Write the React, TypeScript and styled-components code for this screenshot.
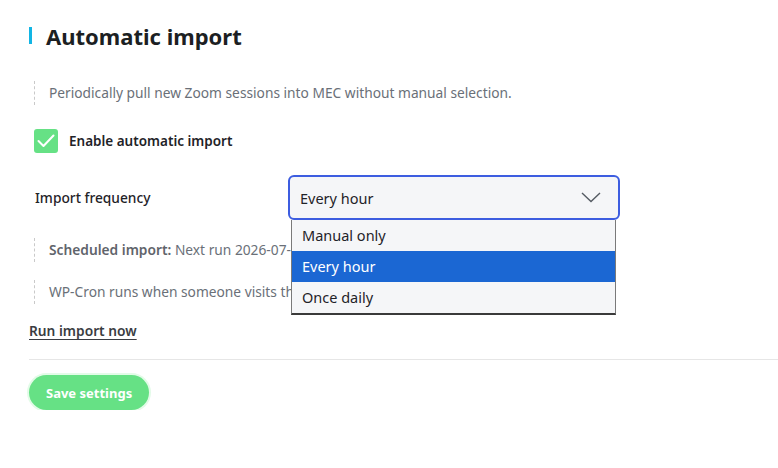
import * as React from 'react';
import styled, { createGlobalStyle } from 'styled-components';

const GlobalStyle = createGlobalStyle`
  html, body {
    margin: 0;
    padding: 0;
    background: #ffffff;
    font-family: "Noto Sans", "Open Sans", sans-serif;
    color: #1d2327;
    overflow: hidden;
  }
`;

const Page = styled.div`
  padding: 19px 0 0 29px;
  width: 749px;
`;

const Title = styled.h2`
  position: relative;
  margin: 0;
  padding-left: 17px;
  font-size: 22px;
  line-height: 34px;
  font-weight: 700;
  color: #1c1f23;

  &::before {
    content: '';
    position: absolute;
    left: 0;
    top: 8px;
    width: 3px;
    height: 17px;
    background: #12b5e4;
  }
`;

const Note = styled.p<{ $top: number }>`
  margin: ${(p) => p.$top}px 0 0 5px;
  padding: 2px 0 2px 14px;
  border-left: 1px dashed #c9c9c9;
  font-size: 13.75px;
  line-height: 20px;
  color: #6a7078;

  b {
    color: #5f646b;
    font-weight: 600;
  }
`;

const CheckRow = styled.label`
  display: flex;
  align-items: center;
  gap: 11px;
  margin: 24px 0 0 5px;
  font-size: 13.5px;
  font-weight: 600;
  color: #1f2328;
`;

const CheckBox = styled.span`
  display: flex;
  align-items: center;
  justify-content: center;
  width: 24px;
  height: 24px;
  border-radius: 3px;
  background: #66e185;
`;

const FieldRow = styled.div`
  display: grid;
  grid-template-columns: 253px 332px;
  align-items: center;
  margin: 22px 0 0 6px;
`;

const FieldLabel = styled.span`
  font-size: 13.75px;
  font-weight: 500;
  color: #1f2328;
`;

const SelectWrap = styled.div`
  position: relative;
`;

const SelectBox = styled.div`
  display: flex;
  align-items: center;
  justify-content: space-between;
  height: 41px;
  padding: 0 17px 0 10px;
  border: 2px solid #3d5de0;
  border-radius: 6px;
  background: #f5f6f8;
  font-size: 14.5px;
  color: #1f2328;
`;

const OptionList = styled.ul`
  position: absolute;
  top: 100%;
  left: 3px;
  width: 323px;
  margin: 0;
  padding: 0;
  list-style: none;
  background: #f5f6f8;
  border: 1px solid #7a7a7a;
  border-top: none;
  border-bottom: 2px solid #3a3a3a;
  z-index: 5;
`;

const Option = styled.li<{ $active?: boolean }>`
  height: 31px;
  line-height: 31px;
  padding-left: 10px;
  font-size: 14.5px;
  color: ${(p) => (p.$active ? '#ffffff' : '#1f2328')};
  background: ${(p) => (p.$active ? '#1b67d3' : 'transparent')};
`;

const RunLink = styled.a`
  display: inline-block;
  margin-top: 17px;
  font-size: 13.75px;
  font-weight: 600;
  color: #3a3d42;
  text-decoration: underline;
  text-underline-offset: 3px;
`;

const Divider = styled.hr`
  margin: 18px 0 0;
  border: none;
  border-top: 1px solid #e6e6e6;
`;

const SaveButton = styled.button`
  margin-top: 15px;
  height: 35px;
  padding: 0 17px;
  border: none;
  border-radius: 18px;
  background: #66e185;
  box-shadow: 0 0 0 2px #e3fbe8;
  color: #ffffff;
  font-family: inherit;
  font-size: 13px;
  font-weight: 700;
  cursor: pointer;
`;

const frequencies = ['Manual only', 'Every hour', 'Once daily'];

export default function App() {
  const selected = 'Every hour';

  return (
    <>
      <GlobalStyle />
      <Page>
        <Title>Automatic import</Title>
        <Note $top={28}>Periodically pull new Zoom sessions into MEC without manual selection.</Note>

        <CheckRow>
          <CheckBox>
            <svg width="18" height="14" viewBox="0 0 18 14" fill="none">
              <polyline points="1.5,7 6.5,12 16.5,1.5" stroke="#fff" strokeWidth="2" strokeLinecap="round" strokeLinejoin="round" />
            </svg>
          </CheckBox>
          Enable automatic import
        </CheckRow>

        <FieldRow>
          <FieldLabel>Import frequency</FieldLabel>
          <SelectWrap>
            <SelectBox>
              {selected}
              <svg width="20" height="11" viewBox="0 0 20 11" fill="none">
                <polyline points="1,1 10,9.5 19,1" stroke="#555b63" strokeWidth="1.4" />
              </svg>
            </SelectBox>
            <OptionList>
              {frequencies.map((f) => (
                <Option key={f} $active={f === selected}>{f}</Option>
              ))}
            </OptionList>
          </SelectWrap>
        </FieldRow>

        <Note $top={18}><b>Scheduled import:</b> Next run 2026-07-14 10:00</Note>
        <Note $top={18}>WP-Cron runs when someone visits the site.</Note>

        <RunLink href="#">Run import now</RunLink>
        <Divider />
        <SaveButton type="button">Save settings</SaveButton>
      </Page>
    </>
  );
}
